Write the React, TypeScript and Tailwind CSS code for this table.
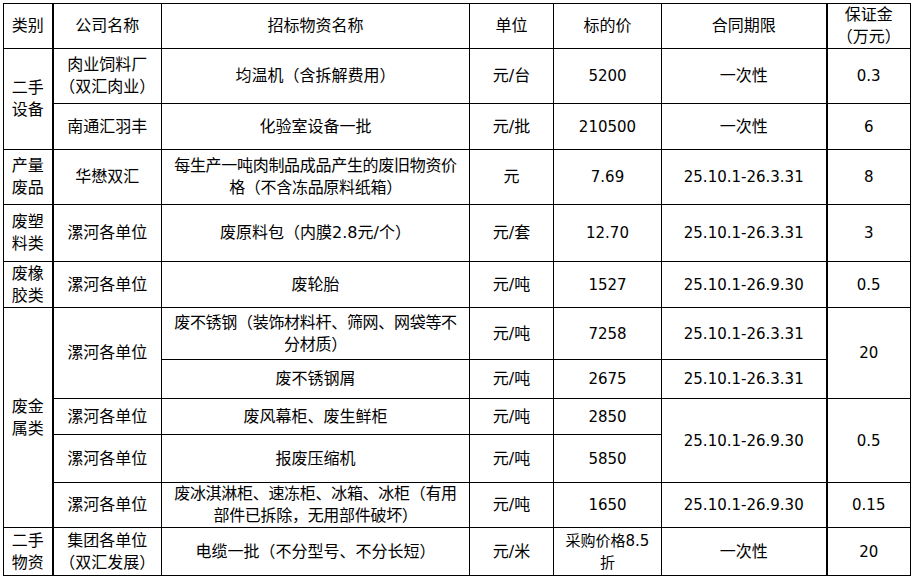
import React from 'react';

const font = { fontFamily: '"DejaVu Sans", "Noto Sans CJK SC", sans-serif' };

// thick line after 类别, thick line before 保证金
const td = 'border border-black text-center align-middle px-0 py-0 leading-[22px] whitespace-nowrap';
const cat = `${td} border-r-2`;
const num = `${td} text-[15px]`;
const dep = `${num} border-l-2`;

export default function App() {
  return (
    <div className="bg-white min-h-[577px] pt-[3px] pl-[3px] text-[16px] text-black" style={font}>
      <table className="border-collapse table-fixed w-[908px]">
        <colgroup>
          <col className="w-[49px]" />
          <col className="w-[109px]" />
          <col className="w-[308px]" />
          <col className="w-[84px]" />
          <col className="w-[108px]" />
          <col className="w-[165px]" />
          <col className="w-[84px]" />
        </colgroup>
        <tbody>
          {/* header */}
          <tr className="h-[45px]">
            <td className={cat}>类别</td>
            <td className={td}>公司名称</td>
            <td className={td}>招标物资名称</td>
            <td className={td}>单位</td>
            <td className={td}>标的价</td>
            <td className={td}>合同期限</td>
            <td className={`${td} border-l-2`}>
              保证金
              <br />
              （万元）
            </td>
          </tr>

          {/* 二手设备 */}
          <tr className="h-[55px]">
            <td className={cat} rowSpan={2}>
              二手
              <br />
              设备
            </td>
            <td className={td}>
              肉业饲料厂
              <br />
              （双汇肉业）
            </td>
            <td className={td}>均温机（含拆解费用）</td>
            <td className={td}>元/台</td>
            <td className={num}>5200</td>
            <td className={td}>一次性</td>
            <td className={dep}>0.3</td>
          </tr>
          <tr className="h-[46px]">
            <td className={td}>南通汇羽丰</td>
            <td className={td}>化验室设备一批</td>
            <td className={td}>元/批</td>
            <td className={num}>210500</td>
            <td className={td}>一次性</td>
            <td className={dep}>6</td>
          </tr>

          {/* 产量废品 */}
          <tr className="h-[55px]">
            <td className={cat}>
              产量
              <br />
              废品
            </td>
            <td className={td}>华懋双汇</td>
            <td className={`${td} tracking-[-0.3px]`}>
              每生产一吨肉制品成品产生的废旧物资价
              <br />
              格（不含冻品原料纸箱）
            </td>
            <td className={td}>元</td>
            <td className={num}>7.69</td>
            <td className={num}>25.10.1-26.3.31</td>
            <td className={dep}>8</td>
          </tr>

          {/* 废塑料类 */}
          <tr className="h-[57px]">
            <td className={cat}>
              废塑
              <br />
              料类
            </td>
            <td className={td}>漯河各单位</td>
            <td className={td}>废原料包（内膜2.8元/个）</td>
            <td className={td}>元/套</td>
            <td className={num}>12.70</td>
            <td className={num}>25.10.1-26.3.31</td>
            <td className={dep}>3</td>
          </tr>

          {/* 废橡胶类 */}
          <tr className="h-[46px]">
            <td className={cat}>
              废橡
              <br />
              胶类
            </td>
            <td className={td}>漯河各单位</td>
            <td className={td}>废轮胎</td>
            <td className={td}>元/吨</td>
            <td className={num}>1527</td>
            <td className={num}>25.10.1-26.9.30</td>
            <td className={dep}>0.5</td>
          </tr>

          {/* 废金属类 */}
          <tr className="h-[52px]">
            <td className={cat} rowSpan={5}>
              废金
              <br />
              属类
            </td>
            <td className={td} rowSpan={2}>漯河各单位</td>
            <td className={`${td} tracking-[-0.3px]`}>
              废不锈钢（装饰材料杆、筛网、网袋等不
              <br />
              分材质）
            </td>
            <td className={td}>元/吨</td>
            <td className={num}>7258</td>
            <td className={num}>25.10.1-26.3.31</td>
            <td className={dep} rowSpan={2}>20</td>
          </tr>
          <tr className="h-[39px]">
            <td className={td}>废不锈钢屑</td>
            <td className={td}>元/吨</td>
            <td className={num}>2675</td>
            <td className={num}>25.10.1-26.3.31</td>
          </tr>
          <tr className="h-[36px]">
            <td className={td}>漯河各单位</td>
            <td className={td}>废风幕柜、废生鲜柜</td>
            <td className={td}>元/吨</td>
            <td className={num}>2850</td>
            <td className={num} rowSpan={2}>25.10.1-26.9.30</td>
            <td className={dep} rowSpan={2}>0.5</td>
          </tr>
          <tr className="h-[48px]">
            <td className={td}>漯河各单位</td>
            <td className={td}>报废压缩机</td>
            <td className={td}>元/吨</td>
            <td className={num}>5850</td>
          </tr>
          <tr className="h-[45px]">
            <td className={td}>漯河各单位</td>
            <td className={`${td} tracking-[-0.3px]`}>
              废冰淇淋柜、速冻柜、冰箱、冰柜（有用
              <br />
              部件已拆除，无用部件破坏）
            </td>
            <td className={td}>元/吨</td>
            <td className={num}>1650</td>
            <td className={num}>25.10.1-26.9.30</td>
            <td className={dep}>0.15</td>
          </tr>

          {/* 二手物资 */}
          <tr className="h-[48px]">
            <td className={cat}>
              二手
              <br />
              物资
            </td>
            <td className={td}>
              集团各单位
              <br />
              （双汇发展）
            </td>
            <td className={td}>电缆一批（不分型号、不分长短）</td>
            <td className={td}>元/米</td>
            <td className={`${td} text-[15px]`}>
              采购价格8.5
              <br />
              折
            </td>
            <td className={td}>一次性</td>
            <td className={dep}>20</td>
          </tr>
        </tbody>
      </table>
    </div>
  );
}
